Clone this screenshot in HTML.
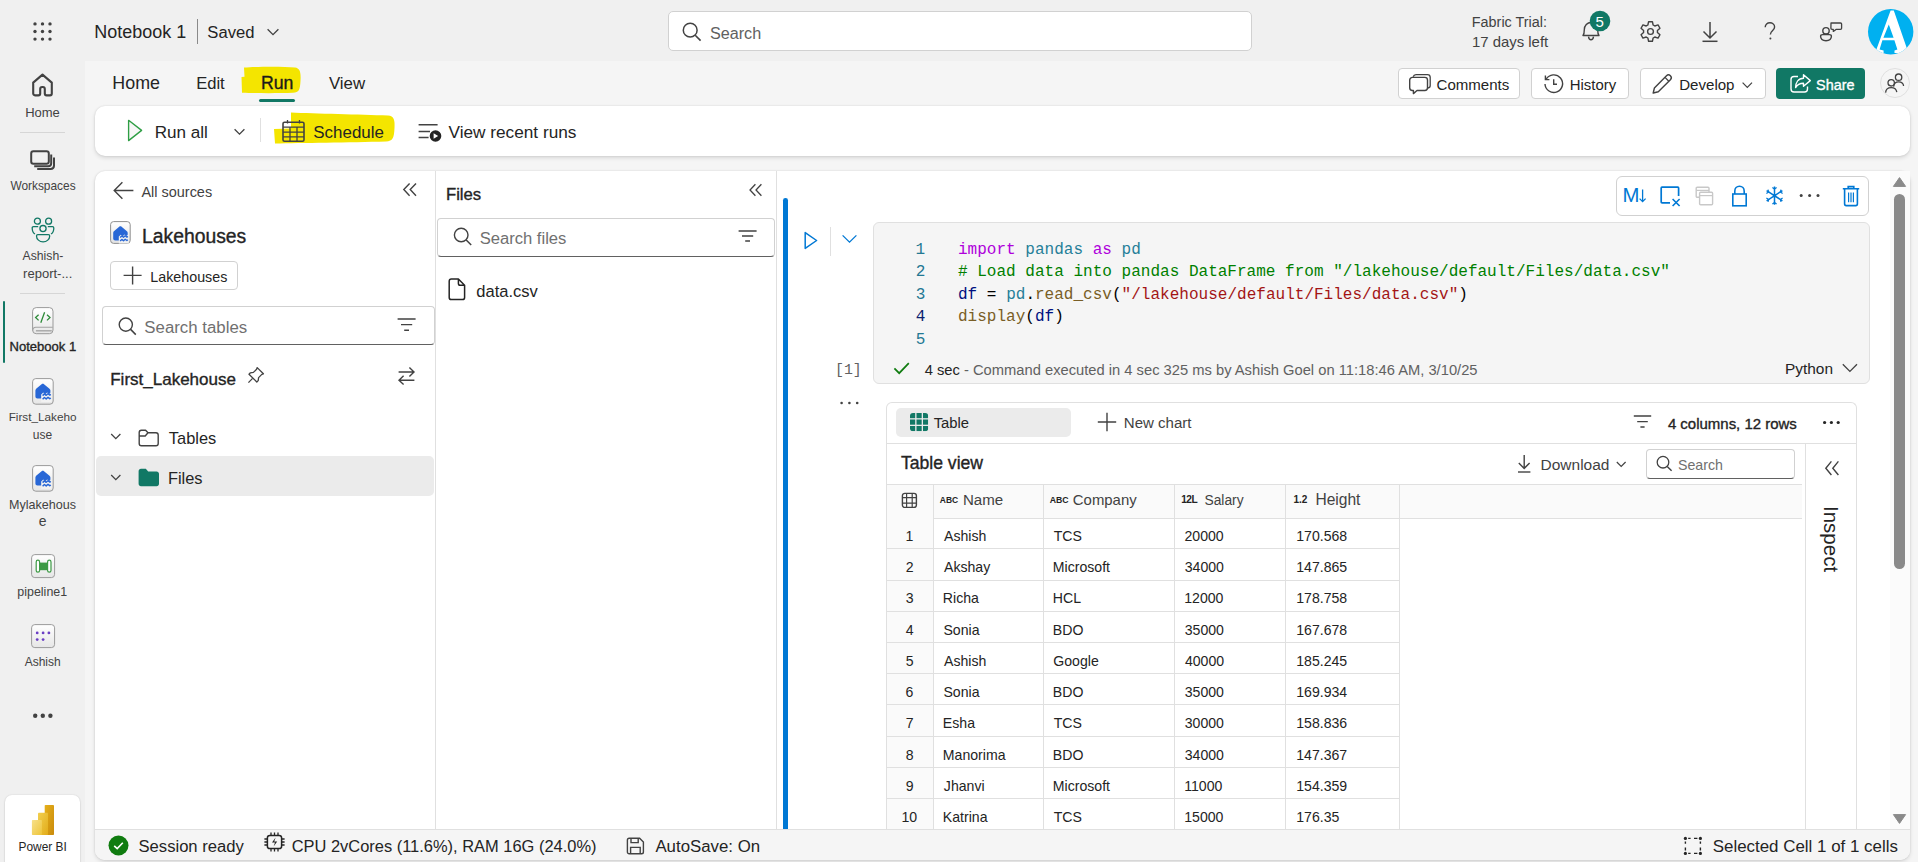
<!DOCTYPE html>
<html><head><meta charset="utf-8"><title>Notebook 1</title>
<style>
html,body{margin:0;padding:0;width:1918px;height:862px;overflow:hidden;background:#f0f0f0}
body{position:relative;font-family:"Liberation Sans",sans-serif}
.b{position:absolute;box-sizing:border-box}
.t{position:absolute;white-space:nowrap;line-height:1}
svg.b{overflow:visible}
</style></head><body>
<div class="b" style="left:0px;top:0px;width:1918px;height:862px;background:#f0f0f0"></div>
<div class="b" style="left:85px;top:61px;width:1833px;height:801px;background:#f5f5f5"></div>
<div class="b" style="left:95px;top:105.5px;width:1815px;height:50.0px;background:#fff;border-radius:10px;box-shadow:0 0 2px rgba(0,0,0,.12),0 2px 4px rgba(0,0,0,.12)"></div>
<div class="b" style="left:95px;top:170.5px;width:1815px;height:689.5px;background:#fff;border-radius:10px;box-shadow:0 0 2px rgba(0,0,0,.12),0 2px 4px rgba(0,0,0,.12);overflow:hidden"></div>
<svg class="b" style="left:0px;top:0px;" width="60" height="60" viewBox="0 0 60 60" fill="none"><circle cx="35" cy="23.9" r="1.7" fill="#424242"/><circle cx="35" cy="31.5" r="1.7" fill="#424242"/><circle cx="35" cy="39.1" r="1.7" fill="#424242"/><circle cx="42.5" cy="23.9" r="1.7" fill="#424242"/><circle cx="42.5" cy="31.5" r="1.7" fill="#424242"/><circle cx="42.5" cy="39.1" r="1.7" fill="#424242"/><circle cx="50" cy="23.9" r="1.7" fill="#424242"/><circle cx="50" cy="31.5" r="1.7" fill="#424242"/><circle cx="50" cy="39.1" r="1.7" fill="#424242"/></svg>
<div class="t " style="left:94.36px;top:23.00px;font-size:17.98px;font-weight:400;color:#242424;font-family:'Liberation Sans', sans-serif;">Notebook 1</div>
<div class="b" style="left:197px;top:19px;width:1.1999999999999886px;height:25px;background:#8a8a8a"></div>
<div class="t " style="left:207.34px;top:25.00px;font-size:16.61px;font-weight:400;color:#242424;font-family:'Liberation Sans', sans-serif;">Saved</div>
<svg class="b" style="left:266px;top:27px;" width="14" height="10" viewBox="0 0 14 10" fill="none"><path d="M1.6 2.2 L7 7.6 L12.4 2.2" stroke="#424242" stroke-width="1.3"/></svg>
<div class="b" style="left:668px;top:11px;width:583.5px;height:40px;background:#fff;border:1px solid #d1d1d1;border-radius:5px"></div>
<svg class="b" style="left:682px;top:22px;" width="20" height="20" viewBox="0 0 20 20" fill="none"><circle cx="8.2" cy="8.2" r="6.9" stroke="#424242" stroke-width="1.5"/><path d="M13.2 13.2 L18.6 18.6" stroke="#424242" stroke-width="1.6"/></svg>
<div class="t " style="left:709.95px;top:25.00px;font-size:16.18px;font-weight:400;color:#616161;font-family:'Liberation Sans', sans-serif;">Search</div>
<div class="t " style="left:1471.85px;top:15.00px;font-size:14.39px;font-weight:400;color:#424242;font-family:'Liberation Sans', sans-serif;">Fabric Trial:</div>
<div class="t " style="left:1471.96px;top:35.00px;font-size:14.92px;font-weight:400;color:#424242;font-family:'Liberation Sans', sans-serif;">17 days left</div>
<svg class="b" style="left:1579px;top:19px;" width="24" height="24" viewBox="0 0 24 24" fill="none"><path d="M4 16.5 C5.3 15 5.3 13.6 5.3 10.8 C5.3 6.6 8.3 3.5 12 3.5 C15.7 3.5 18.7 6.6 18.7 10.8 C18.7 13.6 18.7 15 20 16.5 Z" stroke="#424242" stroke-width="1.4" stroke-linejoin="round"/><path d="M9.5 17.6 C9.8 19.9 10.8 20.8 12 20.8 C13.2 20.8 14.2 19.9 14.5 17.6" stroke="#424242" stroke-width="1.4"/></svg>
<svg class="b" style="left:1589px;top:10px;" width="22" height="22" viewBox="0 0 22 22" fill="none"><circle cx="11" cy="11" r="10.3" fill="#117865"/></svg>
<div class="t " style="left:1595.60px;top:14.00px;font-size:15.00px;font-weight:400;color:#fff;font-family:'Liberation Sans', sans-serif;">5</div>
<svg class="b" style="left:1639px;top:20px;" width="23" height="23" viewBox="0 0 23 23" fill="none"><path d="M14.12 5.01 L13.41 1.68 L9.59 1.68 L8.88 5.01 L7.19 5.98 L3.95 4.94 L2.04 8.24 L4.57 10.53 L4.57 12.47 L2.04 14.76 L3.95 18.06 L7.19 17.02 L8.88 17.99 L9.59 21.32 L13.41 21.32 L14.12 17.99 L15.81 17.02 L19.05 18.06 L20.96 14.76 L18.43 12.47 L18.43 10.53 L20.96 8.24 L19.05 4.94 L15.81 5.98 Z" stroke="#424242" stroke-width="1.4" stroke-linejoin="round"/><circle cx="11.5" cy="11.5" r="2.9" stroke="#424242" stroke-width="1.4"/></svg>
<svg class="b" style="left:1700px;top:20px;" width="20" height="24" viewBox="0 0 20 24" fill="none"><path d="M10 2 V18 M3.5 11.5 L10 18 L16.5 11.5" stroke="#424242" stroke-width="1.5"/><path d="M2.5 21.3 H17.5" stroke="#424242" stroke-width="1.5"/></svg>
<svg class="b" style="left:1762px;top:21px;" width="16" height="20" viewBox="0 0 16 20" fill="none"><path d="M3.2 6.2 C3.2 3.5 5.3 1.8 7.9 1.8 C10.5 1.8 12.6 3.5 12.6 6 C12.6 9.6 8.4 10 8.4 13.4" stroke="#424242" stroke-width="1.4"/><circle cx="8.4" cy="17.4" r="1" fill="#424242"/></svg>
<svg class="b" style="left:1818px;top:20px;" width="26" height="24" viewBox="0 0 26 24" fill="none"><circle cx="8" cy="10.8" r="3.2" stroke="#424242" stroke-width="1.4"/><path d="M2.6 16.3 C2.6 15 3.4 14.6 4.6 14.6 H11.4 C12.6 14.6 13.4 15 13.4 16.3 C13.4 19.2 11 20.7 8 20.7 C5 20.7 2.6 19.2 2.6 16.3 Z" stroke="#424242" stroke-width="1.4"/><path d="M13 3 H22.5 C23.2 3 23.6 3.4 23.6 4.1 V8.3 C23.6 9 23.2 9.4 22.5 9.4 H18 L15.3 11.4 V9.4 H14 C13.3 9.4 12.9 9 12.9 8.3 Z" stroke="#424242" stroke-width="1.3" stroke-linejoin="round"/></svg>
<svg class="b" style="left:1867.8px;top:8.5px;" width="45.4" height="45.4" viewBox="0 0 45.4 45.4" fill="none"><defs><clipPath id="avc"><circle cx="22.7" cy="22.7" r="22.7"/></clipPath></defs><circle cx="22.7" cy="22.7" r="22.7" fill="#00b0f0"/><g clip-path="url(#avc)"><path fill="#fff" fill-rule="evenodd" d="M22.6 1.6 L25.8 1.6 L39.2 40.2 L42 41.4 L42 44 L26.5 44 L26.5 41.4 L29.4 40.6 L26.4 31.3 L14.4 31.3 L11.6 40.4 L15.6 41.4 L15.6 44 L5 44 L5 41.4 L8.4 40.6 Z M20.8 15.6 L15.4 28.8 L25.6 28.8 Z"/></g></svg>
<div class="t " style="left:112.37px;top:75.00px;font-size:17.87px;font-weight:400;color:#242424;font-family:'Liberation Sans', sans-serif;">Home</div>
<div class="t " style="left:196.17px;top:76.00px;font-size:16.59px;font-weight:400;color:#242424;font-family:'Liberation Sans', sans-serif;">Edit</div>
<svg class="b" style="left:238px;top:64px;" width="66" height="32" viewBox="0 0 66 32" fill="none"><path d="M6 3.5 C20 2.5 45 2.2 57 3.5 C62 4.2 63 8 62.5 17 C62 26 61 28.5 55 28.8 C40 29.3 18 29.2 4 28.8 L3.5 13 L6.5 12.8 Z" fill="#f4e500"/></svg>
<div class="t " style="left:260.99px;top:75.00px;font-size:17.66px;font-weight:400;color:#1b1b1b;font-family:'Liberation Sans', sans-serif;-webkit-text-stroke:0.35px #1b1b1b;">Run</div>
<div class="t " style="left:328.90px;top:76.00px;font-size:16.87px;font-weight:400;color:#242424;font-family:'Liberation Sans', sans-serif;">View</div>
<div class="b" style="left:259px;top:99px;width:36px;height:2.5999999999999943px;background:#117865;border-radius:2px"></div>
<svg class="b" style="left:126px;top:118px;" width="18" height="25" viewBox="0 0 18 25" fill="none"><path d="M2.6 2.3 L15.6 12.4 L2.6 22.6 Z" fill="#f7f7f7" stroke="#2e9e44" stroke-width="1.35" stroke-linejoin="round"/></svg>
<div class="t " style="left:154.63px;top:124.00px;font-size:17.10px;font-weight:400;color:#242424;font-family:'Liberation Sans', sans-serif;">Run all</div>
<svg class="b" style="left:233px;top:127px;" width="13" height="10" viewBox="0 0 13 10" fill="none"><path d="M1.6 2.3 L6.5 7.2 L11.4 2.3" stroke="#424242" stroke-width="1.3"/></svg>
<div class="b" style="left:260px;top:118px;width:1.1999999999999886px;height:24px;background:#e0e0e0"></div>
<svg class="b" style="left:270px;top:110px;" width="128" height="36" viewBox="0 0 128 36" fill="none"><path d="M21 2.5 C45 3.5 90 4.5 118 5.5 C124 6 125 10 124.5 18 C124 28 123 31 116 31.5 C80 32.5 30 33 5 33.5 L4 19 L21 18.5 Z" fill="#f4e500"/></svg>
<svg class="b" style="left:282px;top:118.5px;" width="23" height="23" viewBox="0 0 23 23" fill="none"><rect x="1" y="3.2" width="21" height="19" rx="1.5" stroke="#424242" stroke-width="1.6"/><path d="M1 8.2 H22 M1 13.2 H22 M1 17.8 H22 M8 8.2 V22.2 M15 8.2 V22.2 M5.5 1 V4.5 M17.5 1 V4.5" stroke="#424242" stroke-width="1.3"/></svg>
<div class="t " style="left:313.32px;top:125.00px;font-size:16.93px;font-weight:400;color:#242424;font-family:'Liberation Sans', sans-serif;">Schedule</div>
<svg class="b" style="left:417px;top:122px;" width="26" height="22" viewBox="0 0 26 22" fill="none"><path d="M1.6 2.8 H20.6 M1.6 9.4 H13 M1.6 15.6 H11.6" stroke="#424242" stroke-width="1.5"/><circle cx="18.5" cy="14" r="5.8" fill="#242424"/><path d="M16.6 11.2 L21.2 14 L16.6 16.8 Z" fill="#fff"/></svg>
<div class="t " style="left:448.50px;top:124.00px;font-size:17.23px;font-weight:400;color:#242424;font-family:'Liberation Sans', sans-serif;">View recent runs</div>
<div class="b" style="left:1397.5px;top:68.3px;width:122.0px;height:30.400000000000006px;background:#fff;border:1px solid #d1d1d1;border-radius:4px"></div>
<svg class="b" style="left:1408px;top:72px;" width="25" height="24" viewBox="0 0 25 24" fill="none"><path d="M5.2 4.8 C5.6 3.4 6.6 2.6 8 2.6 H19.5 C21 2.6 22.2 3.8 22.2 5.3 V13.4 C22.2 14.8 21.2 15.8 20 16" stroke="#424242" stroke-width="1.3"/><path d="M4.4 5.4 H16.8 C18.3 5.4 19.5 6.6 19.5 8.1 V15.8 C19.5 17.3 18.3 18.5 16.8 18.5 H9 L5.4 21.6 V18.5 H4.4 C2.9 18.5 1.7 17.3 1.7 15.8 V8.1 C1.7 6.6 2.9 5.4 4.4 5.4 Z" stroke="#424242" stroke-width="1.4" stroke-linejoin="round"/></svg>
<div class="t " style="left:1436.55px;top:77.00px;font-size:15.06px;font-weight:400;color:#242424;font-family:'Liberation Sans', sans-serif;">Comments</div>
<div class="b" style="left:1530.5px;top:68.3px;width:98.0px;height:30.400000000000006px;background:#fff;border:1px solid #d1d1d1;border-radius:4px"></div>
<svg class="b" style="left:1542px;top:72px;" width="23" height="23" viewBox="0 0 23 23" fill="none"><path d="M4.2 7.2 A8.8 8.8 0 1 1 3 12" stroke="#424242" stroke-width="1.4"/><path d="M3.4 3.6 V7.6 H7.4" stroke="#424242" stroke-width="1.4"/><path d="M11.7 7.3 V12.2 H15" stroke="#424242" stroke-width="1.4"/></svg>
<div class="t " style="left:1569.81px;top:78.00px;font-size:14.90px;font-weight:400;color:#242424;font-family:'Liberation Sans', sans-serif;">History</div>
<div class="b" style="left:1639.5px;top:68.3px;width:126.5px;height:30.400000000000006px;background:#fff;border:1px solid #d1d1d1;border-radius:4px"></div>
<svg class="b" style="left:1650px;top:72px;" width="24" height="24" viewBox="0 0 24 24" fill="none"><path d="M3.2 21 L4.4 16 L16.5 3.8 C17.6 2.7 19.3 2.7 20.4 3.8 C21.5 4.9 21.5 6.6 20.4 7.7 L8.3 19.8 Z" stroke="#424242" stroke-width="1.4" stroke-linejoin="round"/><path d="M15 5.4 L18.8 9.2" stroke="#424242" stroke-width="1.3"/></svg>
<div class="t " style="left:1679.19px;top:77.00px;font-size:15.09px;font-weight:400;color:#242424;font-family:'Liberation Sans', sans-serif;">Develop</div>
<svg class="b" style="left:1741px;top:79.5px;" width="13" height="10" viewBox="0 0 13 10" fill="none"><path d="M1.6 2.6 L6.3 7.3 L11 2.6" stroke="#424242" stroke-width="1.2"/></svg>
<div class="b" style="left:1776px;top:68.3px;width:89px;height:30.400000000000006px;background:#117865;border-radius:4px"></div>
<svg class="b" style="left:1789px;top:73px;" width="23" height="21" viewBox="0 0 23 21" fill="none"><path d="M9 3.5 H5 C3.3 3.5 2 4.8 2 6.5 V16 C2 17.7 3.3 19 5 19 H15.5 C17.2 19 18.5 17.7 18.5 16 V13.5" stroke="#fff" stroke-width="1.4"/><path d="M14.5 1.8 L21.3 7.6 L14.5 13.2 V10.2 C10.5 10.2 8.2 11.5 6.6 14.6 C6.6 9.6 9.2 5.4 14.5 5.2 Z" stroke="#fff" stroke-width="1.4" stroke-linejoin="round"/></svg>
<div class="t " style="left:1816.02px;top:78.00px;font-size:14.43px;font-weight:400;color:#fff;font-family:'Liberation Sans', sans-serif;-webkit-text-stroke:0.35px #fff;">Share</div>
<div class="b" style="left:1880px;top:68px;width:30px;height:30px;background:#f5f5f5;border:1px solid #e0e0e0;border-radius:50%"></div>
<svg class="b" style="left:1883px;top:71px;" width="24" height="24" viewBox="0 0 24 24" fill="none"><circle cx="15.6" cy="6.2" r="3.2" stroke="#424242" stroke-width="1.3"/><path d="M10.6 15.6 C11 12.4 13 10.9 15.6 10.9 C18.4 10.9 20.4 12.6 20.6 15" stroke="#424242" stroke-width="1.3"/><circle cx="8.2" cy="11.8" r="3.2" stroke="#424242" stroke-width="1.3"/><path d="M2.6 21.6 C2.8 18.2 5 16.6 8.2 16.6 C11.4 16.6 13.4 18.3 13.8 21.2" stroke="#424242" stroke-width="1.3"/></svg>
<svg class="b" style="left:29px;top:71px;" width="27" height="27" viewBox="0 0 27 27" fill="none"><path d="M4.2 11.6 L13.5 3.6 L22.8 11.6 V22.6 C22.8 23.6 22 24.4 21 24.4 H17.6 C16.6 24.4 15.8 23.6 15.8 22.6 V18 C15.8 16.9 14.9 16 13.8 16 H13.2 C12.1 16 11.2 16.9 11.2 18 V22.6 C11.2 23.6 10.4 24.4 9.4 24.4 H6 C5 24.4 4.2 23.6 4.2 22.6 Z" stroke="#424242" stroke-width="2.1" stroke-linejoin="round"/></svg>
<div class="t " style="left:25.16px;top:106.00px;font-size:13.01px;font-weight:400;color:#424242;font-family:'Liberation Sans', sans-serif;">Home</div>
<div class="b" style="left:20px;top:132px;width:45px;height:1px;background:#d6d6d6"></div>
<svg class="b" style="left:29px;top:149px;" width="28" height="22" viewBox="0 0 28 22" fill="none"><rect x="2.2" y="2.2" width="17.6" height="12.6" rx="2.2" stroke="#424242" stroke-width="2"/><path d="M5.2 17.2 H19.2 C21 17.2 22.2 16 22.2 14.2 V5.4" stroke="#424242" stroke-width="2"/><path d="M8.2 20 H21.6 C23.6 20 25 18.6 25 16.6 V8.4" stroke="#424242" stroke-width="2"/></svg>
<div class="t " style="left:10.40px;top:181.00px;font-size:11.90px;font-weight:400;color:#424242;font-family:'Liberation Sans', sans-serif;">Workspaces</div>
<svg class="b" style="left:30px;top:217px;" width="26" height="26" viewBox="0 0 26 26" fill="none"><circle cx="7.4" cy="4.2" r="3" stroke="#117865" stroke-width="1.3"/><circle cx="18.6" cy="4.2" r="3" stroke="#117865" stroke-width="1.3"/><circle cx="13" cy="11.6" r="3.1" stroke="#117865" stroke-width="1.3"/><path d="M7.8 17.6 H18.4 C19.2 17.6 19.7 18.1 19.7 18.9 C19.7 22.3 16.8 24.8 13.1 24.8 C9.4 24.8 6.5 22.3 6.5 18.9 C6.5 18.1 7 17.6 7.8 17.6 Z" stroke="#117865" stroke-width="1.3"/><path d="M8.2 9.6 H3.5 C2.7 9.6 2.2 10.1 2.2 10.9 C2.2 13.8 3.3 16 5 17" stroke="#117865" stroke-width="1.3"/><path d="M17.8 9.6 H22.5 C23.3 9.6 23.8 10.1 23.8 10.9 C23.8 13.8 22.7 16 21 17" stroke="#117865" stroke-width="1.3"/></svg>
<div class="t " style="left:22.60px;top:250.00px;font-size:12.21px;font-weight:400;color:#424242;font-family:'Liberation Sans', sans-serif;">Ashish-</div>
<div class="t " style="left:23.12px;top:267.00px;font-size:13.03px;font-weight:400;color:#424242;font-family:'Liberation Sans', sans-serif;">report-...</div>
<div class="b" style="left:20px;top:293px;width:45px;height:1px;background:#d6d6d6"></div>
<div class="b" style="left:2.9px;top:300.7px;width:2.1px;height:62.30000000000001px;background:#117865;border-radius:2px"></div>
<svg class="b" style="left:32.2px;top:307.3px;" width="21.599999999999994" height="27.30000000000001" viewBox="0 0 21.599999999999994 27.30000000000001" fill="none"><defs><linearGradient id="tg307" x1="0" y1="0" x2="0" y2="1"><stop offset="0" stop-color="#fff"/><stop offset="1" stop-color="#e6e6e6"/></linearGradient></defs><rect x=".6" y=".6" width="20.399999999999995" height="26.100000000000012" rx="3.6" fill="url(#tg307)" stroke="#9a9a9a" stroke-width="1"/><path d="M.8 23.4 C.8 21.4 2 20.3 3.9 20.3 H20.799999999999994" stroke="#a3a3a3" stroke-width="1.1"/><path d="M3.9 23.8 H19.799999999999994" stroke="#ababab" stroke-width="1.5"/><path d="M6.6 7.8 L3.6 10.6 L6.6 13.4 M15 7.8 L18 10.6 L15 13.4 M12.6 5.2 L8.8 15.8" stroke="#2e8b3a" stroke-width="1.3"/></svg>
<div class="t " style="left:9.46px;top:340.00px;font-size:13.05px;font-weight:400;color:#242424;font-family:'Liberation Sans', sans-serif;-webkit-text-stroke:0.35px #242424;">Notebook 1</div>
<svg class="b" style="left:32.2px;top:377.7px;" width="21.799999999999997" height="26.80000000000001" viewBox="0 0 21.799999999999997 26.80000000000001" fill="none"><defs><linearGradient id="tg377" x1="0" y1="0" x2="0" y2="1"><stop offset="0" stop-color="#fff"/><stop offset="1" stop-color="#e6e6e6"/></linearGradient></defs><rect x=".6" y=".6" width="20.599999999999998" height="25.600000000000012" rx="3.2" fill="url(#tg377)" stroke="#9a9a9a" stroke-width="1"/><path d="M3.4 12.6 C3.4 11.8 3.8 11.1 4.4 10.6 L9.6 6.2 C10.3 5.6 11.3 5.6 12 6.2 L17.2 10.6 C17.8 11.1 18.4 11.8 18.4 12.6 V20.6 H5.4 C4.3 20.6 3.4 19.7 3.4 18.6 Z" fill="#2867d6"/><path d="M9.2 16.6 L11.2 14.6 L13.2 16.2 L15.2 14.4 L17.2 16 L19.6 14 V24 H9.2 Z" fill="#f2f2f2"/><path d="M10.6 17.6 L12.4 15.9 L14.2 17.3 L16 15.7 L17.8 17.1 L18.8 16.4 M10.6 21.2 L12.4 19.5 L14.2 20.9 L16 19.3 L17.8 20.7 L18.8 20" stroke="#2867d6" stroke-width="1.5" stroke-linejoin="round"/></svg>
<div class="t " style="left:8.66px;top:411.00px;font-size:11.76px;font-weight:400;color:#424242;font-family:'Liberation Sans', sans-serif;">First_Lakeho</div>
<div class="t " style="left:32.78px;top:429.00px;font-size:12.00px;font-weight:400;color:#424242;font-family:'Liberation Sans', sans-serif;">use</div>
<svg class="b" style="left:32.2px;top:464.8px;" width="21.799999999999997" height="26.80000000000001" viewBox="0 0 21.799999999999997 26.80000000000001" fill="none"><defs><linearGradient id="tg464" x1="0" y1="0" x2="0" y2="1"><stop offset="0" stop-color="#fff"/><stop offset="1" stop-color="#e6e6e6"/></linearGradient></defs><rect x=".6" y=".6" width="20.599999999999998" height="25.600000000000012" rx="3.2" fill="url(#tg464)" stroke="#9a9a9a" stroke-width="1"/><path d="M3.4 12.6 C3.4 11.8 3.8 11.1 4.4 10.6 L9.6 6.2 C10.3 5.6 11.3 5.6 12 6.2 L17.2 10.6 C17.8 11.1 18.4 11.8 18.4 12.6 V20.6 H5.4 C4.3 20.6 3.4 19.7 3.4 18.6 Z" fill="#2867d6"/><path d="M9.2 16.6 L11.2 14.6 L13.2 16.2 L15.2 14.4 L17.2 16 L19.6 14 V24 H9.2 Z" fill="#f2f2f2"/><path d="M10.6 17.6 L12.4 15.9 L14.2 17.3 L16 15.7 L17.8 17.1 L18.8 16.4 M10.6 21.2 L12.4 19.5 L14.2 20.9 L16 19.3 L17.8 20.7 L18.8 20" stroke="#2867d6" stroke-width="1.5" stroke-linejoin="round"/></svg>
<div class="t " style="left:9.00px;top:499.00px;font-size:12.55px;font-weight:400;color:#424242;font-family:'Liberation Sans', sans-serif;">Mylakehous</div>
<div class="t " style="left:38.74px;top:515.00px;font-size:13.96px;font-weight:400;color:#424242;font-family:'Liberation Sans', sans-serif;">e</div>
<svg class="b" style="left:30.9px;top:553.7px;" width="24.200000000000003" height="24.199999999999932" viewBox="0 0 24.200000000000003 24.199999999999932" fill="none"><defs><linearGradient id="tg553" x1="0" y1="0" x2="0" y2="1"><stop offset="0" stop-color="#fff"/><stop offset="1" stop-color="#e6e6e6"/></linearGradient></defs><rect x=".6" y=".6" width="23.000000000000004" height="22.999999999999932" rx="3.2" fill="url(#tg553)" stroke="#9a9a9a" stroke-width="1"/><rect x="9" y="8.6" width="7.2" height="7.6" fill="#3d9a45"/><rect x="5.2" y="6.2" width="3.4" height="12" rx="1.7" stroke="#3d9a45" stroke-width="1.2" fill="#fff"/><rect x="16.6" y="6.2" width="3.4" height="12" rx="1.7" stroke="#3d9a45" stroke-width="1.2" fill="#fff"/></svg>
<div class="t " style="left:17.35px;top:586.00px;font-size:12.44px;font-weight:400;color:#424242;font-family:'Liberation Sans', sans-serif;">pipeline1</div>
<svg class="b" style="left:30.9px;top:623.8px;" width="24.200000000000003" height="24.200000000000045" viewBox="0 0 24.200000000000003 24.200000000000045" fill="none"><defs><linearGradient id="tg623" x1="0" y1="0" x2="0" y2="1"><stop offset="0" stop-color="#fff"/><stop offset="1" stop-color="#e6e6e6"/></linearGradient></defs><rect x=".6" y=".6" width="23.000000000000004" height="23.000000000000046" rx="3.2" fill="url(#tg623)" stroke="#9a9a9a" stroke-width="1"/><circle cx="6.2" cy="8.9" r="1.4" fill="#6b3fc4"/><circle cx="12.1" cy="8.9" r="1.4" fill="#6b3fc4"/><circle cx="17.9" cy="8.9" r="1.4" fill="#6b3fc4"/><circle cx="6.2" cy="15.6" r="1.4" fill="#6b3fc4"/><circle cx="12.1" cy="15.6" r="1.4" fill="#6b3fc4"/></svg>
<div class="t " style="left:24.70px;top:656.00px;font-size:11.99px;font-weight:400;color:#424242;font-family:'Liberation Sans', sans-serif;">Ashish</div>
<svg class="b" style="left:30px;top:710px;" width="26" height="12" viewBox="0 0 26 12" fill="none"><circle cx="5.2" cy="5.7" r="2.2" fill="#424242"/><circle cx="12.8" cy="5.7" r="2.2" fill="#424242"/><circle cx="20.4" cy="5.7" r="2.2" fill="#424242"/></svg>
<div class="b" style="left:4.9px;top:794.7px;width:75.0px;height:75.29999999999995px;background:#fff;border-radius:7px;box-shadow:0 0 2px rgba(0,0,0,.12),0 1px 2px rgba(0,0,0,.12)"></div>
<svg class="b" style="left:31px;top:804px;" width="24" height="32" viewBox="0 0 24 32" fill="none"><defs><linearGradient id="pb1" x1="0" y1="0" x2="1" y2="1"><stop offset="0" stop-color="#f7e08a"/><stop offset="1" stop-color="#eec53a"/></linearGradient><linearGradient id="pb2" x1="0" y1="0" x2="1" y2="1"><stop offset="0" stop-color="#f2cf4e"/><stop offset="1" stop-color="#e2ac1a"/></linearGradient><linearGradient id="pb3" x1="0" y1="0" x2="1" y2="1"><stop offset="0" stop-color="#e6b01a"/><stop offset="1" stop-color="#c98a0c"/></linearGradient></defs><rect x="13.7" y="1" width="9.3" height="30" rx=".8" fill="url(#pb3)"/><rect x="7" y="8.8" width="10" height="22.2" rx=".8" fill="url(#pb2)"/><rect x=".9" y="16" width="10" height="15" rx=".8" fill="url(#pb1)"/></svg>
<div class="t " style="left:18.55px;top:842.00px;font-size:11.88px;font-weight:400;color:#242424;font-family:'Liberation Sans', sans-serif;">Power BI</div>
<div class="b" style="left:435px;top:170.5px;width:1px;height:659.0px;background:#e0e0e0"></div>
<div class="b" style="left:776px;top:170.5px;width:1px;height:659.0px;background:#e0e0e0"></div>
<svg class="b" style="left:112px;top:180px;" width="23" height="21" viewBox="0 0 23 21" fill="none"><path d="M21.4 10.5 H2.4 M10.4 2.2 L2.2 10.5 L10.4 18.8" stroke="#424242" stroke-width="1.4"/></svg>
<div class="t " style="left:141.40px;top:185.00px;font-size:14.48px;font-weight:400;color:#424242;font-family:'Liberation Sans', sans-serif;">All sources</div>
<svg class="b" style="left:401px;top:181px;" width="18" height="18" viewBox="0 0 18 18" fill="none"><path d="M8.6 2.4 L2.8 8.6 L8.6 14.8 M15 2.4 L9.2 8.6 L15 14.8" stroke="#424242" stroke-width="1.4"/></svg>
<svg class="b" style="left:110.2px;top:220.9px;" width="20.8" height="23" viewBox="0 0 20.8 23" fill="none"><defs><linearGradient id="lt" x1="0" y1="0" x2="0" y2="1"><stop offset="0" stop-color="#fff"/><stop offset="1" stop-color="#e2e2e2"/></linearGradient></defs><rect x=".6" y=".6" width="19.6" height="21.8" rx="3" fill="url(#lt)" stroke="#8f8f8f"/><path d="M3.2 11.8 C3.2 11 3.6 10.4 4.2 9.9 L9.2 5.7 C9.9 5.1 10.9 5.1 11.6 5.7 L16.6 9.9 C17.2 10.4 17.7 11 17.7 11.8 V19.4 H5.2 C4.1 19.4 3.2 18.5 3.2 17.4 Z" fill="#2867d6"/><path d="M8.8 15.6 L10.8 13.7 L12.7 15.2 L14.6 13.5 L16.5 15 L18.8 13.1 V22.4 H8.8 Z" fill="#f0f0f0"/><path d="M10.1 16.6 L11.8 15 L13.5 16.3 L15.2 14.8 L16.9 16.1 L17.9 15.4 M10.1 20 L11.8 18.4 L13.5 19.7 L15.2 18.2 L16.9 19.5 L17.9 18.8" stroke="#2867d6" stroke-width="1.4" stroke-linejoin="round"/></svg>
<div class="t " style="left:142.05px;top:227.00px;font-size:19.34px;font-weight:400;color:#242424;font-family:'Liberation Sans', sans-serif;-webkit-text-stroke:0.35px #242424;">Lakehouses</div>
<div class="b" style="left:110.4px;top:261.3px;width:127.4px;height:28.5px;background:#fff;border:1px solid #d1d1d1;border-radius:4px"></div>
<svg class="b" style="left:121px;top:264px;" width="23" height="23" viewBox="0 0 23 23" fill="none"><path d="M11.6 2.4 V20.4 M2.6 11.4 H20.6" stroke="#424242" stroke-width="1.4"/></svg>
<div class="t " style="left:150.26px;top:270.00px;font-size:14.31px;font-weight:400;color:#242424;font-family:'Liberation Sans', sans-serif;">Lakehouses</div>
<div class="b" style="left:101.7px;top:305.7px;width:333.0px;height:39.10000000000002px;background:#fff;border:1px solid #d1d1d1;border-bottom:1px solid #616161;border-radius:4px"></div>
<svg class="b" style="left:117px;top:316px;" width="21" height="21" viewBox="0 0 21 21" fill="none"><circle cx="8.8" cy="8.6" r="6.6" stroke="#424242" stroke-width="1.4"/><path d="M13.6 13.4 L18.8 18.6" stroke="#424242" stroke-width="1.5"/></svg>
<div class="t " style="left:144.33px;top:320.00px;font-size:16.82px;font-weight:400;color:#707070;font-family:'Liberation Sans', sans-serif;">Search tables</div>
<svg class="b" style="left:396px;top:316px;" width="21" height="17" viewBox="0 0 21 17" fill="none"><path d="M1.6 3 H19.6 M5 8.6 H16.2 M8.2 14.2 H13" stroke="#424242" stroke-width="1.4"/></svg>
<div class="t " style="left:110.24px;top:371.00px;font-size:17.00px;font-weight:400;color:#242424;font-family:'Liberation Sans', sans-serif;-webkit-text-stroke:0.35px #242424;">First_Lakehouse</div>
<svg class="b" style="left:246px;top:365px;" width="20" height="20" viewBox="0 0 20 20" fill="none"><path d="M11.2 2.6 L17.4 8.8 L15.8 9.4 L12.6 12.6 L12.2 15.6 L10.8 17 L3 9.2 L4.4 7.8 L7.4 7.4 L10.6 4.2 Z" stroke="#424242" stroke-width="1.3" stroke-linejoin="round"/><path d="M6.6 13.4 L2.4 17.6" stroke="#424242" stroke-width="1.3"/></svg>
<svg class="b" style="left:397px;top:366px;" width="19" height="20" viewBox="0 0 19 20" fill="none"><path d="M1.6 6 H17 M12.4 1.6 L17 6 L12.4 10.4 M17.4 14.2 H2 M6.6 9.8 L2 14.2 L6.6 18.6" stroke="#424242" stroke-width="1.4"/></svg>
<svg class="b" style="left:109px;top:431px;" width="14" height="11" viewBox="0 0 14 11" fill="none"><path d="M2.2 3 L6.8 7.6 L11.4 3" stroke="#424242" stroke-width="1.3"/></svg>
<svg class="b" style="left:137px;top:428px;" width="23" height="20" viewBox="0 0 23 20" fill="none"><path d="M2.2 4.6 C2.2 3.4 3 2.2 4.4 2.2 H8.6 L11 4.8 H19 C20.4 4.8 21.2 5.8 21.2 7 V15.6 C21.2 16.9 20.4 17.8 19 17.8 H4.4 C3 17.8 2.2 16.9 2.2 15.6 Z M2.2 8 H8.2 L11 4.8" stroke="#424242" stroke-width="1.4" stroke-linejoin="round"/></svg>
<div class="t " style="left:168.87px;top:430.00px;font-size:16.40px;font-weight:400;color:#242424;font-family:'Liberation Sans', sans-serif;">Tables</div>
<div class="b" style="left:96.2px;top:456.2px;width:337.6px;height:39.69999999999999px;background:#ebebeb;border-radius:5px"></div>
<svg class="b" style="left:109px;top:472px;" width="14" height="11" viewBox="0 0 14 11" fill="none"><path d="M2.2 3 L6.8 7.6 L11.4 3" stroke="#424242" stroke-width="1.3"/></svg>
<svg class="b" style="left:137px;top:467px;" width="23" height="21" viewBox="0 0 23 21" fill="none"><path d="M1.6 4.2 C1.6 2.8 2.6 1.8 4 1.8 H8.8 L11.2 4.4 H19.6 C21 4.4 22 5.4 22 6.8 V16.8 C22 18.2 21 19.2 19.6 19.2 H4 C2.6 19.2 1.6 18.2 1.6 16.8 Z" fill="#117865"/><path d="M1.6 7.4 H8.6 L11.2 4.4" stroke="#0a5a4b" stroke-width="0"/></svg>
<div class="t " style="left:167.89px;top:470.00px;font-size:16.39px;font-weight:400;color:#242424;font-family:'Liberation Sans', sans-serif;">Files</div>
<div class="t " style="left:445.96px;top:187.00px;font-size:16.69px;font-weight:400;color:#242424;font-family:'Liberation Sans', sans-serif;-webkit-text-stroke:0.35px #242424;">Files</div>
<svg class="b" style="left:748px;top:182px;" width="16" height="16" viewBox="0 0 16 16" fill="none"><path d="M7.4 2.2 L2 8 L7.4 13.8 M13.4 2.2 L8 8 L13.4 13.8" stroke="#424242" stroke-width="1.3"/></svg>
<div class="b" style="left:437.1px;top:217.9px;width:338.1px;height:38.70000000000002px;background:#fff;border:1px solid #d1d1d1;border-bottom:1px solid #616161;border-radius:4px"></div>
<svg class="b" style="left:452px;top:226px;" width="21" height="21" viewBox="0 0 21 21" fill="none"><circle cx="9.2" cy="9" r="6.8" stroke="#424242" stroke-width="1.4"/><path d="M14 13.8 L19.2 19" stroke="#424242" stroke-width="1.5"/></svg>
<div class="t " style="left:479.63px;top:231.00px;font-size:16.63px;font-weight:400;color:#707070;font-family:'Liberation Sans', sans-serif;">Search files</div>
<svg class="b" style="left:737px;top:228px;" width="21" height="16" viewBox="0 0 21 16" fill="none"><path d="M1.6 3 H19.6 M5 8 H16.2 M8.2 13 H13" stroke="#424242" stroke-width="1.4"/></svg>
<svg class="b" style="left:446px;top:277px;" width="21" height="25" viewBox="0 0 21 25" fill="none"><path d="M3.2 4.2 C3.2 3 4.2 2 5.4 2 H12.4 L18.6 8.2 V20.4 C18.6 21.6 17.6 22.6 16.4 22.6 H5.4 C4.2 22.6 3.2 21.6 3.2 20.4 Z M12.4 2 V6.4 C12.4 7.4 13.2 8.2 14.2 8.2 H18.6" stroke="#242424" stroke-width="1.5" stroke-linejoin="round"/></svg>
<div class="t " style="left:476.34px;top:284.00px;font-size:16.53px;font-weight:400;color:#242424;font-family:'Liberation Sans', sans-serif;">data.csv</div>
<div class="b" style="left:783px;top:197.5px;width:4.7999999999999545px;height:632.0px;background:#0078d4;border-radius:2.4px 2.4px 0 0"></div>
<svg class="b" style="left:802px;top:230px;" width="17" height="21" viewBox="0 0 17 21" fill="none"><path d="M3.2 2.6 L14.6 10.5 L3.2 18.4 Z" stroke="#0078d4" stroke-width="1.5" stroke-linejoin="round"/></svg>
<div class="b" style="left:830.2px;top:226.5px;width:1.0px;height:29.0px;background:#e0e0e0"></div>
<svg class="b" style="left:841px;top:233px;" width="18" height="13" viewBox="0 0 18 13" fill="none"><path d="M1.6 2.4 L8.5 9.2 L15.4 2.4" stroke="#0078d4" stroke-width="1.3"/></svg>
<div class="b" style="left:1616.4px;top:176.1px;width:252.39999999999986px;height:39.599999999999994px;background:#fff;border:1px solid #d1d1d1;border-radius:6px"></div>
<div class="t " style="left:1622.38px;top:185.00px;font-size:20.29px;font-weight:400;color:#0078d4;font-family:'Liberation Sans', sans-serif;">M</div>
<svg class="b" style="left:1624.8px;top:186px;" width="25" height="20" viewBox="0 0 25 20" fill="none"><path d="M17.6 3.6 V15.6 M14.6 12.6 L17.6 15.6 L20.6 12.6" stroke="#0078d4" stroke-width="1.3"/></svg>
<svg class="b" style="left:1659px;top:185px;" width="24" height="23" viewBox="0 0 24 23" fill="none"><path d="M11 17.8 H3.2 C2.4 17.8 2.2 17.6 2.2 16.8 V3 C2.2 2.4 2.4 2.2 3 2.2 H18.8 C19.4 2.2 19.6 2.4 19.6 3 V11" stroke="#0078d4" stroke-width="1.7"/><path d="M13.6 14 L20.6 21 M20.6 14 L13.6 21" stroke="#0078d4" stroke-width="1.6"/></svg>
<svg class="b" style="left:1694px;top:185px;" width="22" height="22" viewBox="0 0 22 22" fill="none"><rect x="2.2" y="2.2" width="12.8" height="10" rx="1" stroke="#c8c8c8" stroke-width="1.4"/><path d="M2.2 5.4 H15" stroke="#c8c8c8" stroke-width="1.2"/><rect x="5.6" y="7.2" width="13" height="12.6" rx="1" fill="#fff" stroke="#c8c8c8" stroke-width="1.4"/><path d="M5.6 10.6 H18.6" stroke="#c8c8c8" stroke-width="1.2"/></svg>
<svg class="b" style="left:1730px;top:184px;" width="19" height="24" viewBox="0 0 19 24" fill="none"><path d="M4.8 10 V7.2 C4.8 4.3 6.8 2.2 9.5 2.2 C12.2 2.2 14.2 4.3 14.2 7.2 V10" stroke="#0078d4" stroke-width="1.6"/><rect x="2.8" y="10" width="13.4" height="11.8" stroke="#0078d4" stroke-width="1.6"/></svg>
<svg class="b" style="left:1764.5px;top:185.2px;" width="19" height="21" viewBox="0 0 19 21" fill="none"><path d="M9.5 1.6 V19.8 M1.6 5.6 L17.4 15.8 M17.4 5.6 L1.6 15.8" stroke="#0078d4" stroke-width="1.5"/><path d="M7.4 2.4 L9.5 4 L11.6 2.4 M7.4 19 L9.5 17.4 L11.6 19 M1.4 8.4 L3.6 7 L3 4.6 M16 4.6 L15.4 7 L17.6 8.4 M1.4 13 L3.6 14.4 L3 16.8 M16 16.8 L15.4 14.4 L17.6 13" stroke="#0078d4" stroke-width="1.2"/><circle cx="9.5" cy="10.7" r="1.6" fill="#0078d4"/></svg>
<svg class="b" style="left:1798px;top:191px;" width="24" height="9" viewBox="0 0 24 9" fill="none"><circle cx="3.2" cy="4.5" r="1.5" fill="#424242"/><circle cx="11.6" cy="4.5" r="1.5" fill="#424242"/><circle cx="20" cy="4.5" r="1.5" fill="#424242"/></svg>
<svg class="b" style="left:1840.5px;top:184px;" width="20" height="24" viewBox="0 0 20 24" fill="none"><path d="M1.8 4.8 H18.2 M7.2 4.8 V2.6 H12.8 V4.8" stroke="#0078d4" stroke-width="1.6"/><path d="M3.6 4.8 V19.8 C3.6 20.8 4.2 21.6 5.2 21.6 H14.8 C15.8 21.6 16.4 20.8 16.4 19.8 V4.8" stroke="#0078d4" stroke-width="1.6"/><path d="M7.6 8.4 V18.2 M10 8.4 V18.2 M12.4 8.4 V18.2" stroke="#0078d4" stroke-width="1.2"/></svg>
<div class="b" style="left:873.3px;top:221.6px;width:996.7px;height:162.20000000000002px;background:#f5f5f5;border:1px solid #e0e0e0;border-radius:6px"></div>
<div class="t " style="left:915.54px;top:242.00px;font-size:16.05px;font-weight:400;color:#237893;font-family:'Liberation Mono', monospace;">1</div>
<div class="t " style="left:958.00px;top:242.00px;font-size:16.05px;font-weight:400;color:#000;font-family:'Liberation Mono', monospace;"><span style="color:#af00db">import</span> <span style="color:#267f99">pandas</span> <span style="color:#af00db">as</span> <span style="color:#267f99">pd</span></div>
<div class="t " style="left:915.78px;top:264.00px;font-size:16.05px;font-weight:400;color:#237893;font-family:'Liberation Mono', monospace;">2</div>
<div class="t " style="left:958.00px;top:264.00px;font-size:16.05px;font-weight:400;color:#000;font-family:'Liberation Mono', monospace;"><span style="color:#008000"># Load data into pandas DataFrame from "/lakehouse/default/Files/data.csv"</span></div>
<div class="t " style="left:915.79px;top:287.00px;font-size:16.05px;font-weight:400;color:#237893;font-family:'Liberation Mono', monospace;">3</div>
<div class="t " style="left:958.00px;top:287.00px;font-size:16.05px;font-weight:400;color:#000;font-family:'Liberation Mono', monospace;"><span style="color:#001080">df</span> = <span style="color:#267f99">pd</span>.<span style="color:#795e26">read_csv</span>(<span style="color:#a31515">"/lakehouse/default/Files/data.csv"</span>)</div>
<div class="t " style="left:915.78px;top:309.00px;font-size:16.05px;font-weight:400;color:#0b216f;font-family:'Liberation Mono', monospace;">4</div>
<div class="t " style="left:958.00px;top:309.00px;font-size:16.05px;font-weight:400;color:#000;font-family:'Liberation Mono', monospace;"><span style="color:#795e26">display</span>(<span style="color:#001080">df</span>)</div>
<div class="t " style="left:915.79px;top:332.00px;font-size:16.05px;font-weight:400;color:#237893;font-family:'Liberation Mono', monospace;">5</div>
<svg class="b" style="left:892px;top:360px;" width="19" height="16" viewBox="0 0 19 16" fill="none"><path d="M2.4 8.4 L7.2 13.2 L16.8 3.2" stroke="#107c10" stroke-width="1.7"/></svg>
<div class="t " style="left:924.71px;top:363.00px;font-size:14.72px;font-weight:400;color:#616161;font-family:'Liberation Sans', sans-serif;"><span style="color:#242424">4 sec</span> - Command executed in 4 sec 325 ms by Ashish Goel on 11:18:46 AM, 3/10/25</div>
<div class="t " style="left:1784.96px;top:361.00px;font-size:15.45px;font-weight:400;color:#242424;font-family:'Liberation Sans', sans-serif;">Python</div>
<svg class="b" style="left:1841px;top:362px;" width="18" height="13" viewBox="0 0 18 13" fill="none"><path d="M1.8 2.2 L8.9 9.4 L16 2.2" stroke="#424242" stroke-width="1.3"/></svg>
<div class="t " style="left:835.03px;top:363.00px;font-size:14.86px;font-weight:400;color:#616161;font-family:'Liberation Mono', monospace;">[1]</div>
<svg class="b" style="left:838px;top:398px;" width="23" height="10" viewBox="0 0 23 10" fill="none"><circle cx="3.6" cy="5" r="1.3" fill="#424242"/><circle cx="11.4" cy="5" r="1.3" fill="#424242"/><circle cx="19.2" cy="5" r="1.3" fill="#424242"/></svg>
<div class="b" style="left:1890px;top:171px;width:20px;height:658px;background:#fbfbfb"></div>
<svg class="b" style="left:1892px;top:176px;" width="15" height="12" viewBox="0 0 15 12" fill="none"><path d="M7.5 1.6 L13.6 10.4 H1.4 Z" fill="#8a8a8a" stroke="#8a8a8a" stroke-width="1" stroke-linejoin="round"/></svg>
<div class="b" style="left:1894px;top:194.2px;width:11px;height:374.59999999999997px;background:#8a8a8a;border-radius:5.5px"></div>
<svg class="b" style="left:1892px;top:813px;" width="15" height="12" viewBox="0 0 15 12" fill="none"><path d="M7.5 10.4 L13.6 1.6 H1.4 Z" fill="#8a8a8a" stroke="#8a8a8a" stroke-width="1" stroke-linejoin="round"/></svg>
<div class="b" style="left:885.7px;top:402.3px;width:971.3px;height:426.7px;background:#fff;border:1px solid #e0e0e0;border-bottom:none;border-radius:6px 6px 0 0"></div>
<div class="b" style="left:896.3px;top:408.3px;width:174.29999999999995px;height:29.19999999999999px;background:#ebebeb;border-radius:5px"></div>
<svg class="b" style="left:909.6px;top:413.4px;" width="18.2" height="18.2" viewBox="0 0 18.2 18.2" fill="none"><defs><clipPath id="gc"><rect x="0" y="0" width="18.2" height="18.2" rx="3"/></clipPath></defs><g clip-path="url(#gc)" fill="#117865"><rect x="0" y="0" width="5.2" height="5.2"/><rect x="6.5" y="0" width="5.2" height="5.2"/><rect x="13" y="0" width="5.2" height="5.2"/><rect x="0" y="6.5" width="5.2" height="5.2"/><rect x="6.5" y="6.5" width="5.2" height="5.2"/><rect x="13" y="6.5" width="5.2" height="5.2"/><rect x="0" y="13" width="5.2" height="5.2"/><rect x="6.5" y="13" width="5.2" height="5.2"/><rect x="13" y="13" width="5.2" height="5.2"/></g></svg>
<div class="t " style="left:933.70px;top:416.00px;font-size:14.82px;font-weight:400;color:#242424;font-family:'Liberation Sans', sans-serif;">Table</div>
<svg class="b" style="left:1096px;top:411px;" width="22" height="22" viewBox="0 0 22 22" fill="none"><path d="M11 1.8 V20.2 M1.8 11 H20.2" stroke="#424242" stroke-width="1.4"/></svg>
<div class="t " style="left:1123.80px;top:415.00px;font-size:15.06px;font-weight:400;color:#424242;font-family:'Liberation Sans', sans-serif;">New chart</div>
<svg class="b" style="left:1632px;top:413px;" width="21" height="17" viewBox="0 0 21 17" fill="none"><path d="M1.8 3 H19.2 M5.2 8.6 H15.8 M8.4 14 H12.6" stroke="#424242" stroke-width="1.4"/></svg>
<div class="t " style="left:1667.90px;top:417.00px;font-size:14.97px;font-weight:400;color:#242424;font-family:'Liberation Sans', sans-serif;-webkit-text-stroke:0.35px #242424;">4 columns, 12 rows</div>
<svg class="b" style="left:1821px;top:417px;" width="21" height="10" viewBox="0 0 21 10" fill="none"><circle cx="3.6" cy="5.5" r="1.6" fill="#242424"/><circle cx="10.4" cy="5.5" r="1.6" fill="#242424"/><circle cx="17.2" cy="5.5" r="1.6" fill="#242424"/></svg>
<div class="b" style="left:886.7px;top:443px;width:969.3px;height:1px;background:#e0e0e0"></div>
<div class="t " style="left:900.95px;top:455.00px;font-size:17.59px;font-weight:400;color:#242424;font-family:'Liberation Sans', sans-serif;-webkit-text-stroke:0.35px #242424;">Table view</div>
<svg class="b" style="left:1516px;top:453px;" width="17" height="21" viewBox="0 0 17 21" fill="none"><path d="M8.2 2 V15.4 M2.8 10 L8.2 15.4 L13.6 10" stroke="#424242" stroke-width="1.4"/><path d="M2 19 H14.4" stroke="#424242" stroke-width="1.4"/></svg>
<div class="t " style="left:1540.56px;top:457.00px;font-size:15.49px;font-weight:400;color:#424242;font-family:'Liberation Sans', sans-serif;">Download</div>
<svg class="b" style="left:1615px;top:460px;" width="13" height="9" viewBox="0 0 13 9" fill="none"><path d="M1.8 2 L6.2 6.4 L10.6 2" stroke="#424242" stroke-width="1.2"/></svg>
<div class="b" style="left:1645.7px;top:449.2px;width:149.0999999999999px;height:29.600000000000023px;background:#fff;border:1px solid #d1d1d1;border-bottom:1px solid #616161;border-radius:4px"></div>
<svg class="b" style="left:1655px;top:454px;" width="19" height="20" viewBox="0 0 19 20" fill="none"><circle cx="8" cy="8.2" r="5.8" stroke="#424242" stroke-width="1.3"/><path d="M12.2 12.4 L16.6 16.8" stroke="#424242" stroke-width="1.4"/></svg>
<div class="t " style="left:1678.03px;top:458.00px;font-size:14.19px;font-weight:400;color:#707070;font-family:'Liberation Sans', sans-serif;">Search</div>
<div class="b" style="left:1805.2px;top:443.5px;width:1.0px;height:385.5px;background:#e0e0e0"></div>
<svg class="b" style="left:1823px;top:459px;" width="19" height="19" viewBox="0 0 19 19" fill="none"><path d="M8.4 2.4 L2.8 9.2 L8.4 16 M15.4 2.4 L9.8 9.2 L15.4 16" stroke="#424242" stroke-width="1.4"/></svg>
<div class="t" style="left:1840.86px;top:505.95px;font-size:20.5px;font-weight:400;color:#242424;transform:rotate(90deg);transform-origin:0 0">Inspect</div>
<div class="b" style="left:886.7px;top:484.7px;width:914.8999999999999px;height:33.80000000000001px;background:#fafafa"></div>
<div class="b" style="left:886.7px;top:484.2px;width:914.8999999999999px;height:1.0px;background:#e0e0e0"></div>
<div class="b" style="left:933.5px;top:518px;width:868.0999999999999px;height:1px;background:#e0e0e0"></div>
<div class="b" style="left:886.7px;top:518px;width:46.299999999999955px;height:311px;background:#fafafa"></div>
<div class="b" style="left:933.0px;top:484.7px;width:1.0px;height:344.3px;background:#e0e0e0"></div>
<div class="b" style="left:1042.9px;top:484.7px;width:1.0px;height:344.3px;background:#e0e0e0"></div>
<div class="b" style="left:1174.0px;top:484.7px;width:1.0px;height:344.3px;background:#e0e0e0"></div>
<div class="b" style="left:1284.9px;top:484.7px;width:1.0px;height:344.3px;background:#e0e0e0"></div>
<div class="b" style="left:1399.0px;top:484.7px;width:1.0px;height:344.3px;background:#e0e0e0"></div>
<svg class="b" style="left:900.6px;top:492.4px;" width="17" height="17" viewBox="0 0 17 17" fill="none"><rect x="1.4" y="1.4" width="14" height="14" rx="2.4" stroke="#424242" stroke-width="1.4"/><path d="M1.4 5.6 H15.4 M1.4 11.2 H15.4 M5.6 1.4 V15.4 M11.2 1.4 V15.4" stroke="#424242" stroke-width="1.2"/></svg>
<div class="t " style="left:939.83px;top:496.00px;font-size:8.47px;font-weight:700;color:#242424;font-family:'Liberation Sans', sans-serif;">ABC</div>
<div class="t " style="left:962.99px;top:492.00px;font-size:15.09px;font-weight:400;color:#424242;font-family:'Liberation Sans', sans-serif;">Name</div>
<div class="t " style="left:1049.63px;top:496.00px;font-size:8.71px;font-weight:700;color:#242424;font-family:'Liberation Sans', sans-serif;">ABC</div>
<div class="t " style="left:1072.85px;top:493.00px;font-size:14.92px;font-weight:400;color:#424242;font-family:'Liberation Sans', sans-serif;">Company</div>
<div class="t " style="left:1181.29px;top:495.00px;font-size:10.17px;font-weight:700;color:#242424;font-family:'Liberation Sans', sans-serif;letter-spacing:-0.6px">12L</div>
<div class="t " style="left:1204.45px;top:494.00px;font-size:13.81px;font-weight:400;color:#424242;font-family:'Liberation Sans', sans-serif;">Salary</div>
<div class="t " style="left:1293.40px;top:495.00px;font-size:10.05px;font-weight:700;color:#242424;font-family:'Liberation Sans', sans-serif;">1.2</div>
<div class="t " style="left:1315.45px;top:492.00px;font-size:15.57px;font-weight:400;color:#424242;font-family:'Liberation Sans', sans-serif;">Height</div>
<div class="b" style="left:886.7px;top:548.0px;width:512.8px;height:1.0px;background:#e0e0e0"></div>
<div class="b" style="left:886.7px;top:579.9px;width:512.8px;height:1.0px;background:#e0e0e0"></div>
<div class="b" style="left:886.7px;top:610.9px;width:512.8px;height:1.0px;background:#e0e0e0"></div>
<div class="b" style="left:886.7px;top:641.9px;width:512.8px;height:1.0px;background:#e0e0e0"></div>
<div class="b" style="left:886.7px;top:673.1px;width:512.8px;height:1.0px;background:#e0e0e0"></div>
<div class="b" style="left:886.7px;top:704.4px;width:512.8px;height:1.0px;background:#e0e0e0"></div>
<div class="b" style="left:886.7px;top:735.7px;width:512.8px;height:1.0px;background:#e0e0e0"></div>
<div class="b" style="left:886.7px;top:767.0px;width:512.8px;height:1.0px;background:#e0e0e0"></div>
<div class="b" style="left:886.7px;top:798.2px;width:512.8px;height:1.0px;background:#e0e0e0"></div>
<div class="t " style="left:905.51px;top:529.00px;font-size:14.10px;font-weight:400;color:#242424;font-family:'Liberation Sans', sans-serif;">1</div>
<div class="t " style="left:944.00px;top:529.00px;font-size:14.10px;font-weight:400;color:#242424;font-family:'Liberation Sans', sans-serif;">Ashish</div>
<div class="t " style="left:1053.72px;top:529.00px;font-size:14.10px;font-weight:400;color:#242424;font-family:'Liberation Sans', sans-serif;">TCS</div>
<div class="t " style="left:1184.50px;top:529.00px;font-size:14.10px;font-weight:400;color:#242424;font-family:'Liberation Sans', sans-serif;">20000</div>
<div class="t " style="left:1296.21px;top:529.00px;font-size:14.10px;font-weight:400;color:#242424;font-family:'Liberation Sans', sans-serif;">170.568</div>
<div class="t " style="left:905.65px;top:560.00px;font-size:14.10px;font-weight:400;color:#242424;font-family:'Liberation Sans', sans-serif;">2</div>
<div class="t " style="left:944.00px;top:560.00px;font-size:14.10px;font-weight:400;color:#242424;font-family:'Liberation Sans', sans-serif;">Akshay</div>
<div class="t " style="left:1052.87px;top:560.00px;font-size:14.10px;font-weight:400;color:#242424;font-family:'Liberation Sans', sans-serif;">Microsoft</div>
<div class="t " style="left:1184.78px;top:560.00px;font-size:14.10px;font-weight:400;color:#242424;font-family:'Liberation Sans', sans-serif;">34000</div>
<div class="t " style="left:1296.21px;top:560.00px;font-size:14.10px;font-weight:400;color:#242424;font-family:'Liberation Sans', sans-serif;">147.865</div>
<div class="t " style="left:905.72px;top:591.00px;font-size:14.10px;font-weight:400;color:#242424;font-family:'Liberation Sans', sans-serif;">3</div>
<div class="t " style="left:942.87px;top:591.00px;font-size:14.10px;font-weight:400;color:#242424;font-family:'Liberation Sans', sans-serif;">Richa</div>
<div class="t " style="left:1052.87px;top:591.00px;font-size:14.10px;font-weight:400;color:#242424;font-family:'Liberation Sans', sans-serif;">HCL</div>
<div class="t " style="left:1184.21px;top:591.00px;font-size:14.10px;font-weight:400;color:#242424;font-family:'Liberation Sans', sans-serif;">12000</div>
<div class="t " style="left:1296.21px;top:591.00px;font-size:14.10px;font-weight:400;color:#242424;font-family:'Liberation Sans', sans-serif;">178.758</div>
<div class="t " style="left:905.72px;top:623.00px;font-size:14.10px;font-weight:400;color:#242424;font-family:'Liberation Sans', sans-serif;">4</div>
<div class="t " style="left:943.44px;top:623.00px;font-size:14.10px;font-weight:400;color:#242424;font-family:'Liberation Sans', sans-serif;">Sonia</div>
<div class="t " style="left:1052.87px;top:623.00px;font-size:14.10px;font-weight:400;color:#242424;font-family:'Liberation Sans', sans-serif;">BDO</div>
<div class="t " style="left:1184.78px;top:623.00px;font-size:14.10px;font-weight:400;color:#242424;font-family:'Liberation Sans', sans-serif;">35000</div>
<div class="t " style="left:1296.21px;top:623.00px;font-size:14.10px;font-weight:400;color:#242424;font-family:'Liberation Sans', sans-serif;">167.678</div>
<div class="t " style="left:905.65px;top:654.00px;font-size:14.10px;font-weight:400;color:#242424;font-family:'Liberation Sans', sans-serif;">5</div>
<div class="t " style="left:944.00px;top:654.00px;font-size:14.10px;font-weight:400;color:#242424;font-family:'Liberation Sans', sans-serif;">Ashish</div>
<div class="t " style="left:1053.30px;top:654.00px;font-size:14.10px;font-weight:400;color:#242424;font-family:'Liberation Sans', sans-serif;">Google</div>
<div class="t " style="left:1184.92px;top:654.00px;font-size:14.10px;font-weight:400;color:#242424;font-family:'Liberation Sans', sans-serif;">40000</div>
<div class="t " style="left:1296.21px;top:654.00px;font-size:14.10px;font-weight:400;color:#242424;font-family:'Liberation Sans', sans-serif;">185.245</div>
<div class="t " style="left:905.58px;top:685.00px;font-size:14.10px;font-weight:400;color:#242424;font-family:'Liberation Sans', sans-serif;">6</div>
<div class="t " style="left:943.44px;top:685.00px;font-size:14.10px;font-weight:400;color:#242424;font-family:'Liberation Sans', sans-serif;">Sonia</div>
<div class="t " style="left:1052.87px;top:685.00px;font-size:14.10px;font-weight:400;color:#242424;font-family:'Liberation Sans', sans-serif;">BDO</div>
<div class="t " style="left:1184.78px;top:685.00px;font-size:14.10px;font-weight:400;color:#242424;font-family:'Liberation Sans', sans-serif;">35000</div>
<div class="t " style="left:1296.21px;top:685.00px;font-size:14.10px;font-weight:400;color:#242424;font-family:'Liberation Sans', sans-serif;">169.934</div>
<div class="t " style="left:905.65px;top:716.00px;font-size:14.10px;font-weight:400;color:#242424;font-family:'Liberation Sans', sans-serif;">7</div>
<div class="t " style="left:942.87px;top:716.00px;font-size:14.10px;font-weight:400;color:#242424;font-family:'Liberation Sans', sans-serif;">Esha</div>
<div class="t " style="left:1053.72px;top:716.00px;font-size:14.10px;font-weight:400;color:#242424;font-family:'Liberation Sans', sans-serif;">TCS</div>
<div class="t " style="left:1184.78px;top:716.00px;font-size:14.10px;font-weight:400;color:#242424;font-family:'Liberation Sans', sans-serif;">30000</div>
<div class="t " style="left:1296.21px;top:716.00px;font-size:14.10px;font-weight:400;color:#242424;font-family:'Liberation Sans', sans-serif;">158.836</div>
<div class="t " style="left:905.65px;top:748.00px;font-size:14.10px;font-weight:400;color:#242424;font-family:'Liberation Sans', sans-serif;">8</div>
<div class="t " style="left:942.87px;top:748.00px;font-size:14.10px;font-weight:400;color:#242424;font-family:'Liberation Sans', sans-serif;">Manorima</div>
<div class="t " style="left:1052.87px;top:748.00px;font-size:14.10px;font-weight:400;color:#242424;font-family:'Liberation Sans', sans-serif;">BDO</div>
<div class="t " style="left:1184.78px;top:748.00px;font-size:14.10px;font-weight:400;color:#242424;font-family:'Liberation Sans', sans-serif;">34000</div>
<div class="t " style="left:1296.21px;top:748.00px;font-size:14.10px;font-weight:400;color:#242424;font-family:'Liberation Sans', sans-serif;">147.367</div>
<div class="t " style="left:905.72px;top:779.00px;font-size:14.10px;font-weight:400;color:#242424;font-family:'Liberation Sans', sans-serif;">9</div>
<div class="t " style="left:943.86px;top:779.00px;font-size:14.10px;font-weight:400;color:#242424;font-family:'Liberation Sans', sans-serif;">Jhanvi</div>
<div class="t " style="left:1052.87px;top:779.00px;font-size:14.10px;font-weight:400;color:#242424;font-family:'Liberation Sans', sans-serif;">Microsoft</div>
<div class="t " style="left:1184.21px;top:779.00px;font-size:14.10px;font-weight:400;color:#242424;font-family:'Liberation Sans', sans-serif;">11000</div>
<div class="t " style="left:1296.21px;top:779.00px;font-size:14.10px;font-weight:400;color:#242424;font-family:'Liberation Sans', sans-serif;">154.359</div>
<div class="t " style="left:901.52px;top:810.00px;font-size:14.10px;font-weight:400;color:#242424;font-family:'Liberation Sans', sans-serif;">10</div>
<div class="t " style="left:942.87px;top:810.00px;font-size:14.10px;font-weight:400;color:#242424;font-family:'Liberation Sans', sans-serif;">Katrina</div>
<div class="t " style="left:1053.72px;top:810.00px;font-size:14.10px;font-weight:400;color:#242424;font-family:'Liberation Sans', sans-serif;">TCS</div>
<div class="t " style="left:1184.21px;top:810.00px;font-size:14.10px;font-weight:400;color:#242424;font-family:'Liberation Sans', sans-serif;">15000</div>
<div class="t " style="left:1296.21px;top:810.00px;font-size:14.10px;font-weight:400;color:#242424;font-family:'Liberation Sans', sans-serif;">176.35</div>
<div class="b" style="left:95px;top:829px;width:1815px;height:31px;background:#f5f5f5;border-top:1px solid #e0e0e0;border-radius:0 0 10px 10px"></div>
<svg class="b" style="left:108px;top:835px;" width="21" height="21" viewBox="0 0 21 21" fill="none"><circle cx="10.5" cy="10.5" r="10" fill="#107c10"/><path d="M6.2 10.8 L9.2 13.6 L14.8 7.8" stroke="#fff" stroke-width="1.6"/></svg>
<div class="t " style="left:138.53px;top:839.00px;font-size:16.63px;font-weight:400;color:#242424;font-family:'Liberation Sans', sans-serif;">Session ready</div>
<svg class="b" style="left:263px;top:831px;" width="23" height="22" viewBox="0 0 23 22" fill="none"><rect x="4.4" y="4.4" width="14.2" height="13.2" rx="2.4" stroke="#242424" stroke-width="1.5"/><path d="M8 1.4 V4.4 M11.5 1.4 V4.4 M15 1.4 V4.4 M8 17.6 V20.6 M11.5 17.6 V20.6 M15 17.6 V20.6 M1.4 8 H4.4 M1.4 11 H4.4 M1.4 14 H4.4 M18.6 8 H21.6 M18.6 11 H21.6 M18.6 14 H21.6" stroke="#242424" stroke-width="1.3"/><path d="M12.6 6.6 L9 11.6 H12 L10.6 15.4 L14.2 10.4 H11.2 Z" fill="#242424"/></svg>
<div class="t " style="left:291.68px;top:838.00px;font-size:16.46px;font-weight:400;color:#242424;font-family:'Liberation Sans', sans-serif;">CPU 2vCores (11.6%), RAM 16G (24.0%)</div>
<svg class="b" style="left:625px;top:836px;" width="21" height="20" viewBox="0 0 21 20" fill="none"><path d="M2.4 4 C2.4 3 3.2 2.2 4.2 2.2 H14.6 L18.4 6 V16 C18.4 17 17.6 17.8 16.6 17.8 H4.2 C3.2 17.8 2.4 17 2.4 16 Z" stroke="#424242" stroke-width="1.4"/><path d="M6 2.2 V6.6 H13.2 V2.2 M5.6 17.8 V11.4 H15.2 V17.8" stroke="#424242" stroke-width="1.4"/></svg>
<div class="t " style="left:655.40px;top:839.00px;font-size:16.82px;font-weight:400;color:#242424;font-family:'Liberation Sans', sans-serif;">AutoSave: On</div>
<svg class="b" style="left:1682px;top:835px;" width="22" height="22" viewBox="0 0 22 22" fill="none"><path d="M6.2 3.4 H8.6 M12 3.4 H15.4 M6.2 18.4 H8.6 M12 18.4 H15.4 M3.4 6.4 V8.8 M3.4 12.4 V15.4 M18.4 6.4 V8.8 M18.4 12.4 V15.4" stroke="#242424" stroke-width="1.4"/><circle cx="3.4" cy="3.4" r="1.6" fill="#242424"/><circle cx="18.4" cy="3.4" r="1.6" fill="#242424"/><circle cx="3.4" cy="18.4" r="1.6" fill="#242424"/><circle cx="18.4" cy="18.4" r="1.6" fill="#242424"/></svg>
<div class="t " style="left:1712.72px;top:839.00px;font-size:16.91px;font-weight:400;color:#242424;font-family:'Liberation Sans', sans-serif;">Selected Cell 1 of 1 cells</div>
</body></html>
